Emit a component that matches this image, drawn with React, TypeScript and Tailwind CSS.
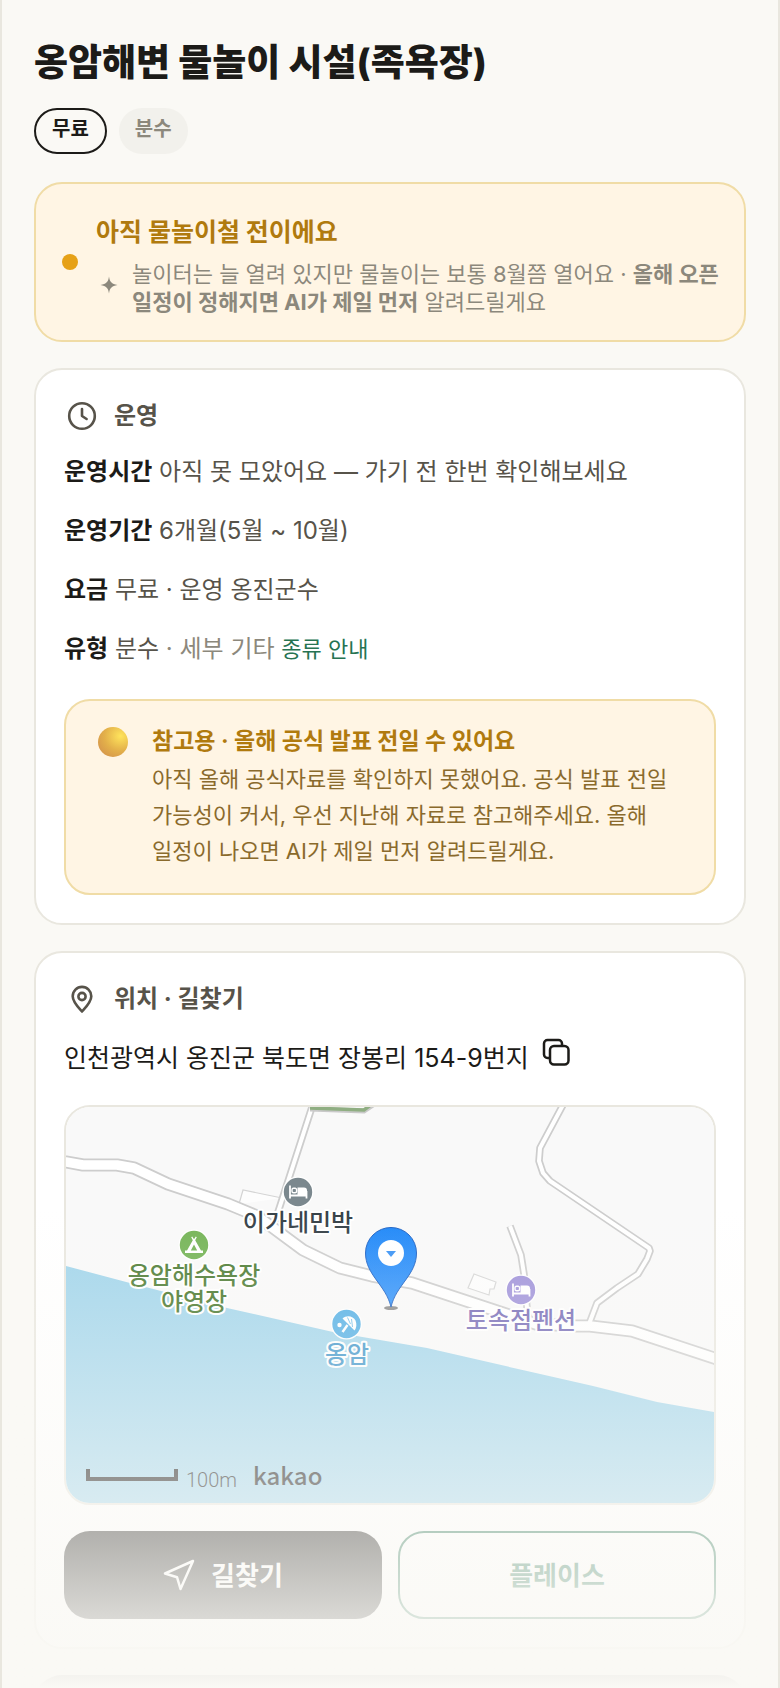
import React from 'react';

const rows = [
  { label: '운영시간', value: '아직 못 모았어요 — 가기 전 한번 확인해보세요' },
  { label: '운영기간', value: '6개월(5월 ~ 10월)' },
  { label: '요금', value: '무료 · 운영 옹진군수' },
];

function ClockIcon() {
  return (
    <svg className="h-9 w-9" viewBox="0 0 36 36" fill="none" stroke="currentColor" strokeWidth="2.6" strokeLinecap="round" strokeLinejoin="round">
      <circle cx="18" cy="18" r="12.8" />
      <path d="M18 11v7l4.600 3" />
    </svg>
  );
}

function PlaceIcon() {
  return (
    <svg className="h-9 w-9" viewBox="0 0 36 36" fill="none" stroke="currentColor" strokeWidth="2.6" strokeLinecap="round" strokeLinejoin="round">
      <path d="M18 30.500c-4.500-5-9.300-9.700-9.300-15.300a9.300 9.300 0 0 1 18.600 0c0 5.600-4.800 10.300-9.300 15.300z" />
      <circle cx="18" cy="15.500" r="3.600" />
    </svg>
  );
}

function CopyIcon() {
  return (
    <svg className="h-8 w-8" viewBox="0 0 32 32" fill="none" stroke="currentColor" strokeWidth="2.500" strokeLinejoin="round">
      <rect x="9" y="9" width="18.500" height="18.500" rx="4" />
      <path d="M9 21H6.500a3.500 3.500 0 0 1-3.500-3.500V6.500A3.500 3.500 0 0 1 6.500 3h11A3.500 3.500 0 0 1 21 6.500V9" />
    </svg>
  );
}

function SparkIcon() {
  return (
    <svg className="h-[18px] w-[18px]" viewBox="0 0 18 18" fill="currentColor">
      <path d="M9 .5c.7 5.200 2.500 7.500 8.500 8.500-6 1-7.800 3.300-8.500 8.500C8.300 12.300 6.500 10 .5 9 6.500 8 8.300 5.700 9 .5z" />
    </svg>
  );
}

function NaviIcon() {
  return (
    <svg className="h-8 w-8" viewBox="0 0 32 32" fill="none" stroke="currentColor" strokeWidth="2.500" strokeLinejoin="round">
      <path d="M30 2L2 14.500l12 3.700L17.500 30z" />
    </svg>
  );
}

function Bed({ x, y, color }: { x: number; y: number; color: string }) {
  return (
    <g transform={`translate(${x} ${y})`}>
      <circle r="15.500" fill="#fff" />
      <circle r="14.200" fill={color} />
      <path d="M-8-6.500v13M8.500-1v7.500M-8 3.500H8.500" stroke="#fff" strokeWidth="1.800" />
      <path d="M-.5-4.500h6.500a3 3 0 0 1 3 3V3h-9.500z" fill="#fff" />
      <rect x="-6" y="-3.800" width="4.600" height="4.600" rx="1.500" fill="none" stroke="#fff" strokeWidth="1.400" />
    </g>
  );
}

const road = 'M-6 54L0 55 17 58H51L68 61 102 77 162 97 191 109 237 143 274 161 306 169 346 176 440 207 470 217 509 219H524L566 224 648 251 656 254';
const lane = 'M247-4L246 0 214 99 209 114';
const hill = 'M498-4L474 41 473 54 477 66 484 74 583 141 584 144 581 152 572 167 551 181 531 196 523 217';
const alley = 'M444 119L455 148 458 167 462 212';

function KakaoMap() {
  return (
    <svg className="block h-full w-full" viewBox="0 0 648 396" preserveAspectRatio="xMidYMid slice" fontFamily='"Noto Sans CJK KR", sans-serif'>
      <defs>
        <linearGradient id="pin" x1="0" y1="0" x2="0" y2="1">
          <stop offset="0" stopColor="#2088f8" />
          <stop offset="1" stopColor="#3595fb" />
        </linearGradient>
      </defs>
      <rect width="648" height="396" fill="#f9f9f9" />
      <path d="M0 159L64 176 161 201 267 225 361 241 461 264 527 279 591 295 648 305V396H0z" fill="#a2d5eb" />
      <path d="M173 97L177 83 216 91" fill="#fdfdfd" stroke="#d4d4d4" strokeWidth="1.200" />
      <path d="M408 167L430 175 428 182 424 182 423 188 402 181z" fill="#fdfdfd" stroke="#d6d6d6" strokeWidth="1.200" />
      <g fill="none" stroke="#cdcdcd" strokeLinejoin="round">
        <path d={hill} strokeWidth="7.500" />
        <path d={alley} strokeWidth="7.500" />
        <path d={lane} strokeWidth="7.500" />
        <path d={road} strokeWidth="13" />
      </g>
      <g fill="none" stroke="#fff" strokeLinejoin="round">
        <path d={hill} strokeWidth="4" />
        <path d={alley} strokeWidth="4" />
        <path d={lane} strokeWidth="4" />
        <path d={road} strokeWidth="9.500" />
      </g>
      <path d="M244 2L298 4 307-2" fill="none" stroke="#c9c9c9" strokeWidth="5" />
      <path d="M244 1L298 3 306-3" fill="none" stroke="#8fae82" strokeWidth="3.500" />

      <Bed x={232} y={85} color="#7b888e" />
      <Bed x={455} y={183} color="#a093da" />
      <g transform="translate(128 138)">
        <circle r="15.500" fill="#fff" />
        <circle r="14.200" fill="#75b457" />
        <path d="M-1.800-8.500L0-5.800 1.800-8.500 2.800-7.800 1.200-4.800 7 5.500H9V8H-9V5.500H-7L-1.200-4.800-2.800-7.800z" fill="#fff" />
        <path d="M0-.5L3.200 5.500H-3.200z" fill="#75b457" />
      </g>
      <g transform="translate(280.500 217)">
        <circle r="15.500" fill="#fff" />
        <circle r="14.200" fill="#52afe5" />
        <path d="M-4-5.500C0-9.500 7-8 9-3.500 10.500 0 10 4 8 6.500z" fill="#fff" />
        <path d="M1 1L-4 8" stroke="#fff" strokeWidth="2.400" />
        <path d="M1-6.500L4 0M5-5L6 3" stroke="#52afe5" strokeWidth=".8" />
        <circle cx="-7" cy="1" r="2.200" fill="#fff" />
      </g>

      <g fontSize="24" fontWeight="500" textAnchor="middle" stroke="#fff" strokeWidth="4" strokeLinejoin="round" paintOrder="stroke">
        <text x="232" y="124" fill="#364148">이가네민박</text>
        <text x="128" y="177" fill="#4d7c34">옹암해수욕장</text>
        <text x="128" y="203" fill="#467529">야영장</text>
        <text x="281" y="256" fill="#3b94ca">옹암</text>
        <text x="455" y="222" fill="#756ab6">토속점펜션</text>
      </g>

      <ellipse cx="325" cy="201" rx="7" ry="2" fill="#8a8a8a" />
      <path d="M325 200C320 178 299.500 168 299.500 146a25.500 25.500 0 0 1 51 0C350.500 168 330 178 325 200z" fill="url(#pin)" stroke="#1e62c4" strokeWidth="1" />
      <circle cx="325" cy="146" r="13" fill="#fff" />
      <path d="M320 144h10l-5 6z" fill="#3a93f5" />

      <path d="M22 362v10h88v-10" fill="none" stroke="#111" strokeWidth="4" />
      <text x="120" y="380" fontSize="20" fill="#111" fontFamily="Roboto, sans-serif" fontWeight="300">100m</text>
      <text x="187" y="378" fontSize="24" fontWeight="500" fill="#111">kakao</text>
    </svg>
  );
}

function CardTitle({ icon, children }: { icon: React.ReactNode; children: React.ReactNode }) {
  return (
    <h2 className="flex items-center gap-3.5 text-[24px] leading-9 font-bold text-[#57534a]">
      {icon}
      {children}
    </h2>
  );
}

function App() {
  return (
    <div lang="ko" className="relative h-screen overflow-hidden border-x-2 border-[#e9e7df] bg-[#faf9f5] px-8 pt-9 font-['Inter','Noto_Sans_CJK_KR',sans-serif] break-keep text-[#1c1b18]">
      <h1 className="text-[37px] leading-[54px] font-extrabold">옹암해변 물놀이 시설(족욕장)</h1>

      <div className="mt-[18px] flex gap-3 text-[20px] leading-[38px]">
        <span className="h-[46px] rounded-full border-2 border-[#1c1b18] px-4 font-bold">무료</span>
        <span className="h-[46px] rounded-full bg-[#f2f1ec] px-4 pt-0.5 font-semibold text-[#8c887c]">분수</span>
      </div>

      <section className="mt-7 flex items-center gap-[18px] rounded-[28px] border-2 border-[#f0dca6] bg-[#fff5e4] pt-[30px] pr-4 pb-6 pl-[26px]">
        <span className="mb-1.5 h-4 w-4 shrink-0 rounded-full bg-[#e6a117]" />
        <div>
          <h2 className="text-[25px] leading-9 font-bold text-[#b07a0e]">아직 물놀이철 전이에요</h2>
          <div className="mt-2.5 flex items-center gap-3.5 text-[22px] leading-7 text-[#8c887c]">
            <span className="mb-1.5 shrink-0 pl-1">
              <SparkIcon />
            </span>
            <p>
              놀이터는 늘 열려 있지만 물놀이는 보통 8월쯤 열어요 · <b>올해 오픈 일정이 정해지면 AI가 제일 먼저</b> 알려드릴게요
            </p>
          </div>
        </div>
      </section>

      <section className="mt-[26px] rounded-[28px] border-2 border-[#e9e7df] bg-white p-7">
        <CardTitle icon={<ClockIcon />}>운영</CardTitle>
        <div className="mt-2 text-[24px] leading-[59px] text-[#57534a]">
          {rows.map((row) => (
            <p key={row.label}>
              <b className="text-[#1c1b18]">{row.label}</b> {row.value}
            </p>
          ))}
          <p>
            <b className="text-[#1c1b18]">유형</b> 분수 <span className="text-[#8c887c]">· 세부 기타</span>{' '}
            <a href="#types" className="text-[22px] text-[#267352]">종류 안내</a>
          </p>
        </div>
        <div className="mt-5 flex gap-6 rounded-[26px] border-2 border-[#f0dca6] bg-[#fff5e4] px-8 pt-[22px] pb-6">
          <span className="mt-1 h-[30px] w-[30px] shrink-0 rounded-full bg-radial-[at_75%_30%] from-[#ffe45c] via-[#e3b04a] to-[#cf8a4c]" />
          <div>
            <h3 className="text-[23px] leading-9 font-bold text-[#b07a0e]">참고용 · 올해 공식 발표 전일 수 있어요</h3>
            <p className="mt-0.5 text-[22px] leading-9 text-[#8a6a2c]">
              아직 올해 공식자료를 확인하지 못했어요. 공식 발표 전일 가능성이 커서, 우선 지난해 자료로 참고해주세요. 올해 일정이 나오면 AI가 제일 먼저 알려드릴게요.
            </p>
          </div>
        </div>
      </section>

      <section className="mt-[26px] rounded-[28px] border-2 border-[#e9e7df] bg-white p-7">
        <CardTitle icon={<PlaceIcon />}>위치 · 길찾기</CardTitle>
        <div className="mt-5 flex items-start gap-3 text-[25px] leading-[42px]">
          인천광역시 옹진군 북도면 장봉리 154-9번지
          <button type="button" aria-label="주소 복사">
            <CopyIcon />
          </button>
        </div>
        <div className="mt-[26px] h-[400px] overflow-hidden rounded-[26px] border-2 border-[#e9e7df]">
          <KakaoMap />
        </div>
        <div className="mt-[26px] grid grid-cols-2 gap-4 text-[26px] font-bold">
          <button type="button" className="flex h-[88px] items-center justify-center gap-4 rounded-[26px] bg-[#1c1b18] text-white">
            <NaviIcon />
            길찾기
          </button>
          <button type="button" className="h-[88px] rounded-[26px] border-2 border-[#267352] text-[#267352]">플레이스</button>
        </div>
      </section>

      <section className="mt-[26px] h-24 rounded-[28px] bg-[#1c1b18]" />

      <div className="pointer-events-none absolute -inset-x-0.5 bottom-0 h-[480px] bg-linear-to-b from-[#faf9f5]/0 to-[#faf9f5]" />
    </div>
  );
}

export default App;
